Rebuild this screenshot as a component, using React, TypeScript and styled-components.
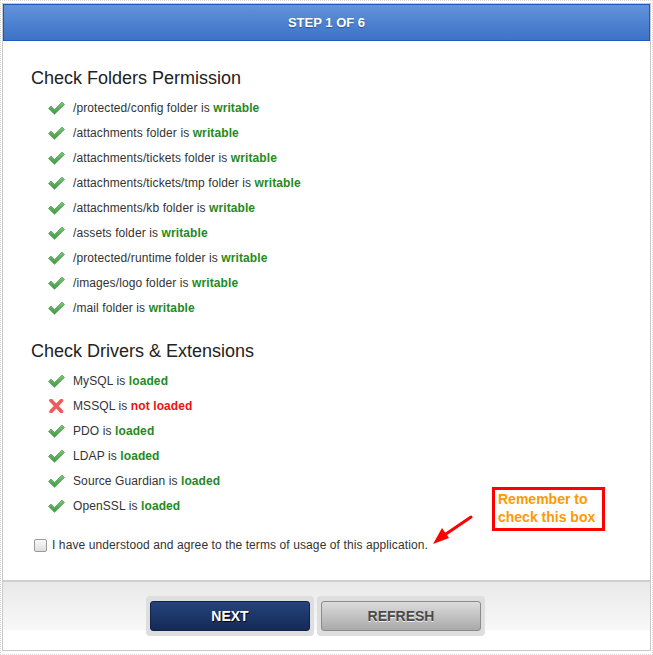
import React, { FC } from "react";
import styled, { createGlobalStyle } from "styled-components";

const GlobalStyle = createGlobalStyle`
    html, body {
        margin: 0;
        padding: 0;
        background: #ffffff;
        font-family: "Liberation Sans", Arial, sans-serif;
    }
`;

const Outer = styled.div`
    width: 653px;
    height: 655px;
    box-sizing: border-box;
    padding: 2px 1px 3px 1px;
    border: 1px dotted #d6d6d6;
`;

const Frame = styled.div`
    height: 100%;
    box-sizing: border-box;
    border: 1px solid #c9c9c9;
    display: flex;
    flex-direction: column;
    background: #ffffff;
`;

const Header = styled.div`
    height: 37px;
    box-sizing: border-box;
    border: 1px solid #1d59c2;
    background: linear-gradient(to bottom, #6393da 0%, #4a7fcf 60%, #3d72c6 100%);
    color: #ffffff;
    font-weight: bold;
    font-size: 13px;
    display: flex;
    align-items: center;
    justify-content: center;
    text-shadow: 0 1px 1px rgba(0, 0, 0, 0.35);
`;

const Body = styled.div`
    flex: 1;
    padding: 26px 28px 0 28px;
    position: relative;
`;

const Title = styled.h2`
    margin: 0 0 6px 0;
    font-size: 18px;
    font-weight: normal;
    color: #222222;
    line-height: 22px;
`;

const List = styled.ul`
    list-style: none;
    margin: 0 0 20px 0;
    padding: 0 0 0 17px;
`;

const Item = styled.li`
    display: flex;
    align-items: center;
    height: 25px;
    font-size: 12px;
    letter-spacing: 0.1px;
    color: #333333;
    gap: 8px;
`;

const Status = styled.b<{ ok: boolean }>`
    color: ${(p) => (p.ok ? "#1e8b1e" : "#ee1111")};
`;

const Agree = styled.label`
    display: flex;
    align-items: center;
    gap: 5px;
    margin: 18px 0 0 3px;
    font-size: 12px;
    letter-spacing: 0.1px;
    color: #333333;
`;

const Box = styled.span`
    width: 11px;
    height: 11px;
    border: 1px solid #9a9a9a;
    border-radius: 2px;
    background: linear-gradient(to bottom, #fafafa, #dedede);
`;

const Reminder = styled.div`
    position: absolute;
    left: 489px;
    top: 446px;
    width: 103px;
    border: 3px solid #ff0000;
    color: #ff9900;
    font-weight: bold;
    font-size: 14px;
    line-height: 18px;
    padding: 0 1px 2px 3px;
    white-space: nowrap;
`;

const Arrow = styled.svg`
    position: absolute;
    left: 402px;
    top: 472px;
`;

const Footer = styled.div`
    height: 70px;
    border-top: 2px solid #cfcfcf;
    background: linear-gradient(to bottom, #e9e9e9 0%, #f8f8f8 70%, #ffffff 72%, #ffffff 100%);
    display: flex;
    justify-content: center;
    align-items: flex-start;
    padding: 14px 22px 0 0;
    box-sizing: border-box;
    gap: 3px;
`;

const BtnWrap = styled.div`
    background: #dedede;
    border-radius: 4px;
    padding: 5px 4px;
`;

const Button = styled.button<{ primary?: boolean }>`
    width: 160px;
    height: 30px;
    border-radius: 3px;
    font-family: "Liberation Sans", Arial, sans-serif;
    font-weight: bold;
    font-size: 14px;
    cursor: pointer;
    border: 1px solid ${(p) => (p.primary ? "#0f2247" : "#8a8a8a")};
    color: ${(p) => (p.primary ? "#ffffff" : "#4a4a4a")};
    background: ${(p) =>
        p.primary
            ? "linear-gradient(to bottom, #24437c, #152a55)"
            : "linear-gradient(to bottom, #dcdcdc, #a9a9a9)"};
    text-shadow: ${(p) =>
        p.primary ? "1px 1px 0 #000000" : "0 1px 0 #eeeeee"};
`;

const CheckIcon: FC = () => (
    <svg width="17" height="14" viewBox="0 0 17 14">
        <defs>
            <linearGradient id="g" x1="0" y1="0" x2="0" y2="1">
                <stop offset="0" stopColor="#7ac77a" />
                <stop offset="1" stopColor="#3f9a3f" />
            </linearGradient>
        </defs>
        <path
            d="M0.5 7.5 L3 5 L6.5 8.5 L14 1 L16.5 3.5 L6.5 13.3 Z"
            fill="url(#g)"
            stroke="#3a8c3a"
            strokeWidth="0.6"
            strokeLinejoin="round"
        />
    </svg>
);

const CrossIcon: FC = () => (
    <svg width="17" height="14" viewBox="0 0 17 14">
        <path
            d="M3 1.5 L13.5 12.5 M13.5 1.5 L3 12.5"
            stroke="#f05a5a"
            strokeWidth="3.6"
            strokeLinecap="round"
        />
    </svg>
);

interface Row {
    label: string;
    ok: boolean;
    word: string;
}

const folders: Row[] = [
    "/protected/config",
    "/attachments",
    "/attachments/tickets",
    "/attachments/tickets/tmp",
    "/attachments/kb",
    "/assets",
    "/protected/runtime",
    "/images/logo",
    "/mail",
].map((f) => ({ label: `${f} folder is `, ok: true, word: "writable" }));

const drivers: Row[] = [
    { label: "MySQL is ", ok: true, word: "loaded" },
    { label: "MSSQL is ", ok: false, word: "not loaded" },
    { label: "PDO is ", ok: true, word: "loaded" },
    { label: "LDAP is ", ok: true, word: "loaded" },
    { label: "Source Guardian is ", ok: true, word: "loaded" },
    { label: "OpenSSL is ", ok: true, word: "loaded" },
];

const Rows: FC<{ rows: Row[] }> = ({ rows }) => (
    <List>
        {rows.map((r) => (
            <Item key={r.label}>
                {r.ok ? <CheckIcon /> : <CrossIcon />}
                <span>
                    {r.label}
                    <Status ok={r.ok}>{r.word}</Status>
                </span>
            </Item>
        ))}
    </List>
);

const App: FC = () => {
    return (
        <>
            <GlobalStyle />
            <Outer>
                <Frame>
                    <Header>STEP 1 OF 6</Header>
                    <Body>
                        <Title>Check Folders Permission</Title>
                        <Rows rows={folders} />
                        <Title>Check Drivers &amp; Extensions</Title>
                        <Rows rows={drivers} />
                        <Agree>
                            <Box />
                            I have understood and agree to the terms of usage of this application.
                        </Agree>
                        <Reminder>
                            Remember to
                            <br />
                            check this box
                        </Reminder>
                        <Arrow width="72" height="36" viewBox="0 0 72 36">
                            <line x1="66" y1="4" x2="38" y2="23" stroke="#ff0000" strokeWidth="3" strokeLinecap="round" />
                            <polygon points="28,31 37,15 44,25" fill="#ff0000" />
                        </Arrow>
                    </Body>
                    <Footer>
                        <BtnWrap>
                            <Button primary>NEXT</Button>
                        </BtnWrap>
                        <BtnWrap>
                            <Button>REFRESH</Button>
                        </BtnWrap>
                    </Footer>
                </Frame>
            </Outer>
        </>
    );
};

export default App;
